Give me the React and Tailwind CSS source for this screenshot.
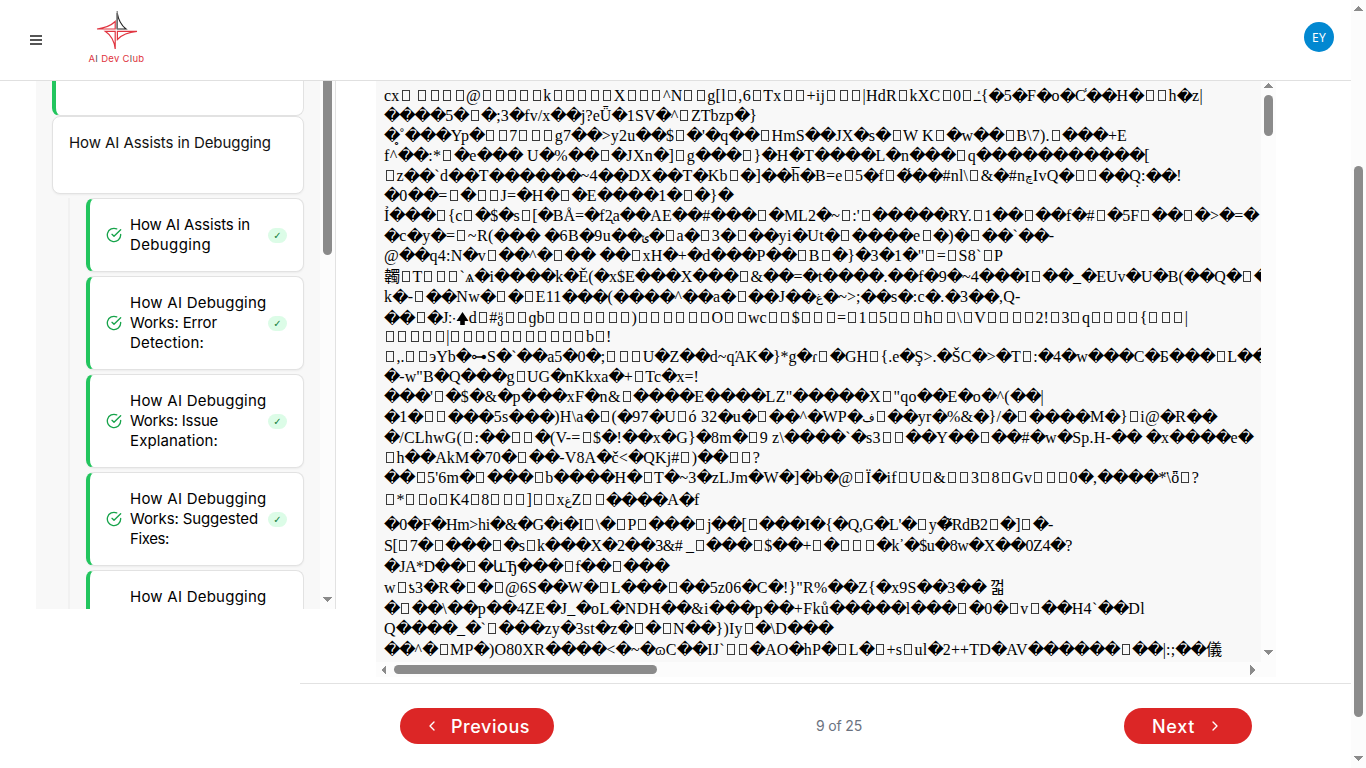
import { useLayoutEffect, useRef } from "react";

// Stretches or tightens its text so that it fills the given width.
function Fit({ w, className = "", children }) {
  const ref = useRef(null);
  useLayoutEffect(() => {
    const el = ref.current;
    el.style.letterSpacing = "0px";
    const n = Array.from(el.textContent.replace(/[�\p{M}]/gu, "")).length;
    if (w && n) el.style.letterSpacing = (w - el.getBoundingClientRect().width) / n + "px";
  }, [w]);
  return (
    <span ref={ref} className={"inline-block whitespace-pre " + className}>
      {children}
    </span>
  );
}

// [line height, width (0 = natural), text]; "□" stands for a control character
const LINES = [
  [20, 820, "cx□ □□□□@□□□□□k□□□□□X□□□^N□□g[l□,6□Tx□□+ij□□□|HdR□kXC□0□ݝ{�5�F�o�C̾��H�□□h�z|"],
  [20, 373, "����5�□�;3�fv/x��j?eǕ�1SV�^□ZTbzp�}"],
  [20, 743, "�̥˚���Yp�□□7□□□g7��>y2u��$□�'�q��□HmS��JX�s�□W K□�w��□B\\7).□���+E"],
  [20, 766, "f^��:*□�e��� U�%��□�JXn�]□g���□}�H�T����L�n���□q�����������["],
  [20, 798, "□z��`d��T������~4��DX��T�Kb□�]��h̅�B=e□5�f□�͑��#nl\\□&�#nچIvQ�□□��Q̣:��!"],
  [20, 349, "�0��=□�□□J=�H�□�E����1�□�}�"],
  [20, 0, "Ỉ���□{c□�$�s□[�BÅ=�f2̨a��AE��#���□�ML2�~□:'□�����RY.□1��□��f�#□�5F□��□�>�=�"],
  [20, 671, "�c�y�=□~R(��� �6B�9u��ݶ�□a�□3�□��yi�Ut�□����e□�)�□��`��-"],
  [20.5, 619, "@��q4:N�v□��^�□�� ��□xH�+�d���P��□B□�}�3�1�\"□=□S8`□P"],
  [20.5, 0, "韣□T□□□`ѧ�i����k�Ě(�x$E���X���□&��=�t����.��f�9�~4���I□��_�EUv�U�B(��Q�□�"],
  [20.5, 638, "k�-□��Nw�□�□E11���(����^��a�□��J��غ�~>;��s�:c�.�3��,Q-"],
  [19.5, 804, "��□�J჻🡅d□#ݐ□□ɡb□□□□□□□)□□□□□□O□□wc□□$□□□=□1□5□□□h□□\\□V□□□□2!□3□q□□□□{□□□|"],
  [19.5, 227, "□□□□□|□□□□□□□□□□□b□!"],
  [20.5, 0, "□,.□□эYb�⊶S�`��a5�0�;□□□U�Z��d~qΆK�}*g�ɾ□�GH□{.e�Ş>.�ŠC�>�T□:�4�w���C�Б���□L��"],
  [20, 315, "�-w\"B�Q���g□UG�nKkxa�+□Tc�x=!"],
  [20, 660, "���'□�$�&�p���xF�n&□����E����LZ\"�����X□\"qo��E�o�^(��|"],
  [20.5, 833, "�1�□□���5s���)H\\a�□(�97�U□ó 32�u�□��^�WP�ف□��yr�%&�}/�□����M�}□i@�R��"],
  [20.5, 869, "�/CLhwG(□:��□□�(V-=□$�!��x�G}�8m�□9 z\\����`�s3□□��Y��□��#�w�Sp.H-�� �x����e�"],
  [20, 376, "□h��AkM�70�□��-V8A�č<�QKj#□)��□□?"],
  [22, 815, "��□5'6m�□���□b����H�□T�~3�zLJm�W�]�b�@□Ï�if□U□&□□3□8□Gv□□□0�,����*̈\\ȫ□?"],
  [24.5, 315, "□*□□o□K4□8□□□]□□xغZ□□����A�f"],
  [21.5, 669, "�0�F�Hm>hi�&�G�i�I□\\�□P□���□j��[□���I�{�Q,G�L'�□y�̴̃RdB2□�]□�-"],
  [20.5, 688, "S[□7�□���□�s□k���X�2��3&# _□���□$��+□�□□□�k᾿�$u�8w�X��0Z4�?"],
  [21, 285, "�JA*D��□�ևЂ���□f��□���"],
  [21, 621, "w□ƾ3�R�□�□@6S��W�□L���□��5z06�C�!}\"R%��Z{�x9S��3�� 껇"],
  [20.5, 761, "�□��\\��p��4ZE�J_�oL�NDH��&i���p��+Fků�����l���□�0�□v□��H4`��Dl"],
  [20.5, 449, "Q����_�`□���zy�3st�z�□�□N��})Iy□�\\D���"],
  [20, 838, "��^�□MP�)O80XR����<�~�ɷC��IJ`□□�AO�hP�□L�□+s□ul�2++TD�AV������□��|:;��儀"],
];

const ODD = { "ݝ": "ـٔـ", "ݶ": "ݵ", "چ": "چ", "ف": "ف", "غ": "غ", "ݐ": "ვ̎" };

function Glyphs({ text }) {
  return text.split(/(�\p{M}*|[□🡅ݝݶچفغݐ])/u).filter(Boolean).map((part, i) => {
    if (part === "□")
      return <span key={i} className="ml-[2px] mr-[2.45px] inline-block h-[11px] w-[8px] border border-[#3a3a3a]" />;
    if (part.startsWith("�"))
      return (
        <span key={i} className="inline-block w-[15.3px] h-[20px] align-bottom tracking-normal">
          {part}
        </span>
      );
    if (part === "🡅")
      return (
        <svg key={i} className="inline-block w-[13px] h-[14px] align-[-3px]" viewBox="0 0 13 14">
          <path d="M6.5 0 12.5 9H8.8V13H4.2V9H.5Z" />
        </svg>
      );
    if (ODD[part])
      return <bdi key={i} className="text-[12px] tracking-normal">{ODD[part]}</bdi>;
    return part;
  });
}

function Arrow({ dir }) {
  const d = { up: "M0 5 5 0 10 5Z", down: "M0 0H10L5 5Z", left: "M5 0V10L0 5Z", right: "M0 0V10L5 5Z" }[dir];
  const flat = dir === "up" || dir === "down";
  return (
    <svg className={flat ? "mr-px block shrink-0" : "block shrink-0"} width={flat ? 10 : 5} height={flat ? 5 : 10} fill="#8b8b8b" shapeRendering="crispEdges">
      <path d={d} />
    </svg>
  );
}

function Logo() {
  return (
    <div className="flex w-[57px] flex-col items-center">
      <svg width="46" height="42" viewBox="0 0 46 42" fill="none" strokeWidth="1.2">
        <g stroke="#e03540">
          <path d="M3 19Q15 17.5 21.2 11.5V19Z" />
          <path d="M11.5 21.4H21.2V39Q20 27 11.5 21.4Z" />
          <path d="M23.4 21.4H43Q30 22.5 23.4 29.5Z" />
        </g>
        <path d="M23.2 3V19H32Q25 13.5 23.2 3Z" stroke="#222" />
        <path d="M23.2 1V19" stroke="#777" />
      </svg>
      <div className="mt-px h-[12px] text-[9.5px] leading-[12px] text-[#e03540]">
        <Fit w={56}>A<span className="text-[#555]">I</span> Dev C<span className="text-[#555]">l</span>ub</Fit>
      </div>
    </div>
  );
}

function CheckCircle() {
  return (
    <svg className="shrink-0" width="16" height="16" viewBox="0 0 24 24" fill="none" stroke="#16a34a" strokeWidth="2" strokeLinecap="round" strokeLinejoin="round">
      <path d="M22 11.08V12a10 10 0 1 1-5.93-9.14" />
      <path d="m9 11 3 3L22 4" />
    </svg>
  );
}

function Lesson({ lines }) {
  return (
    <div className="flex shrink-0 items-center rounded-lg border border-l-4 border-[#e2e2e2] border-l-[#22c55e] bg-white pl-4 pr-4 shadow-xs">
      <CheckCircle />
      <div className="ml-2 flex w-[138px] flex-col pb-px text-[15px] leading-5 text-black">
        {lines.map(([t, w]) => (
          <Fit key={t} w={w} className="self-start">{t}</Fit>
        ))}
      </div>
      <span className="flex h-[15px] w-[19px] shrink-0 items-center justify-center rounded-full bg-[#dcfce7] font-['DejaVu_Sans'] text-[10px] text-[#15803d]">✓</span>
    </div>
  );
}

const DEBUG = ["How AI Debugging", 136.5];
const LESSONS = [
  [["How AI Assists in", 120], ["Debugging", 81]],
  [DEBUG, ["Works: Error", 87], ["Detection:", 74]],
  [DEBUG, ["Works: Issue", 88], ["Explanation:", 88]],
  [DEBUG, ["Works: Suggested", 128], ["Fixes:", 39]],
];

function Sidebar() {
  return (
    <aside className="ml-9 flex h-[528px] w-[300px] shrink-0 overflow-hidden border-r border-[#e2e2e2] bg-[#f8f8f8]">
      <div className="flex w-[284px] shrink-0 flex-col pl-4 pr-4">
        <div className="h-[35px] shrink-0 rounded-b-lg border border-t-0 border-l-4 border-[#e2e2e2] border-l-[#22c55e] bg-white" />
        <div className="h-[78px] shrink-0 rounded-lg border border-[#e2e2e2] bg-white px-4 pt-4 text-[15px] leading-5 text-[#111] shadow-xs">
          <Fit w={202}>How AI Assists in Debugging</Fit>
        </div>
        <div className="ml-4 mt-1 flex flex-col gap-1 border-l-2 border-[#f1f1f1] pl-4">
          {LESSONS.map((l, i) => (
            <div key={i} className={l.length === 2 ? "flex h-[74px] flex-col *:h-full" : "flex h-[94px] flex-col *:h-full"}>
              <Lesson lines={l} />
            </div>
          ))}
          <div className="h-[39px] rounded-t-lg border border-b-0 border-l-4 border-[#e2e2e2] border-l-[#22c55e] bg-white pl-10 pt-4 text-[15px] leading-5 text-black">
            <Fit w={136.5}>How AI Debugging</Fit>
          </div>
        </div>
      </div>
      <div className="flex w-[15px] flex-col items-center justify-between bg-[#fcfcfc] pb-[7px]">
        <div className="h-[174px] w-[9px] rounded-b-full bg-[#8b8b8b]" />
        <Arrow dir="down" />
      </div>
    </aside>
  );
}

function TextPanel() {
  return (
    <section className="ml-10 flex h-[596px] w-[900px] flex-col bg-[#fcfcfc]">
      <div className="flex h-[581px]">
        <div className="w-[885px] overflow-hidden bg-[#f8f8f8] pl-2 pt-[5px] font-['Liberation_Serif','DejaVu_Sans','Noto_Sans_CJK_JP','Noto_Sans_CJK_KR',serif] text-[16px] leading-[20px] text-black">
          {LINES.map(([h, w, t], i) => (
            <div key={i} className="whitespace-pre" style={{ height: h }}>
              <Fit w={w} className="h-[20px]"><Glyphs text={t} /></Fit>
            </div>
          ))}
        </div>
        <div className="flex w-[15px] flex-col items-center justify-between pb-[7px] pt-[2px]">
          <div className="flex flex-col items-center gap-[7px]">
            <Arrow dir="up" />
            <div className="h-[41px] w-[9px] rounded-full bg-[#8b8b8b]" />
          </div>
          <Arrow dir="down" />
        </div>
      </div>
      <div className="flex h-[15px] items-center justify-between pl-[5px] pr-[21px]">
        <div className="flex items-center gap-2">
          <Arrow dir="left" />
          <div className="h-[9px] w-[263px] rounded-full bg-[#8b8b8b]" />
        </div>
        <Arrow dir="right" />
      </div>
    </section>
  );
}

function Chevron({ d }) {
  return (
    <svg width="16" height="16" viewBox="0 0 24 24" fill="none" stroke="white" strokeWidth="2" strokeLinecap="round" strokeLinejoin="round">
      <path d={d} />
    </svg>
  );
}

export default function App() {
  return (
    <div className="flex h-[768px] w-[1366px] overflow-hidden bg-white font-['Inter',sans-serif]">
      <div className="flex w-[1351px] flex-col">
        <header className="flex h-[81px] shrink-0 border-b border-[#e0e0e0] pl-[30px] pr-[17px]">
          <div className="mt-[35px] flex h-[10px] w-[12px] flex-col justify-between">
            <div className="h-[2px] bg-[#555]" />
            <div className="h-[2px] bg-[#555]" />
            <div className="h-[2px] bg-[#555]" />
          </div>
          <div className="ml-[46px] mt-[10px]"><Logo /></div>
          <div className="ml-auto mt-[22px] flex size-[30px] items-center justify-center rounded-full bg-[#0288d1] font-['Noto_Sans'] text-[12px] text-white">
            <Fit w={14} className="pt-px">EY</Fit>
          </div>
        </header>
        <div className="flex h-[602px] shrink-0">
          <Sidebar />
          <TextPanel />
        </div>
        <footer className="ml-[300px] flex h-[85px] items-start justify-between border-t border-[#e2e2e2] pl-[100px] pr-[99px] pt-6">
          <button className="flex h-9 w-[154px] items-center rounded-full bg-[#dc2626] pl-6 text-[18px] font-medium text-white">
            <Chevron d="m15 18-6-6 6-6" />
            <Fit w={79} className="ml-[11px]">Previous</Fit>
          </button>
          <span className="mt-2 text-[14px] leading-5 text-[#6b7280]"><Fit w={46}>9 of 25</Fit></span>
          <button className="flex h-9 w-[128px] items-center rounded-full bg-[#dc2626] pl-[28px] text-[18px] font-medium text-white">
            <Fit w={43} className="mr-[12px]">Next</Fit>
            <Chevron d="m9 18 6-6-6-6" />
          </button>
        </footer>
      </div>
      <div className="flex w-[15px] flex-col items-center bg-[#fcfcfc] pb-[7px] pt-[6px]">
        <Arrow dir="up" />
        <div className="mt-[155px] mb-auto h-[551px] w-[9px] shrink-0 rounded-full bg-[#8b8b8b]" />
        <Arrow dir="down" />
      </div>
    </div>
  );
}
